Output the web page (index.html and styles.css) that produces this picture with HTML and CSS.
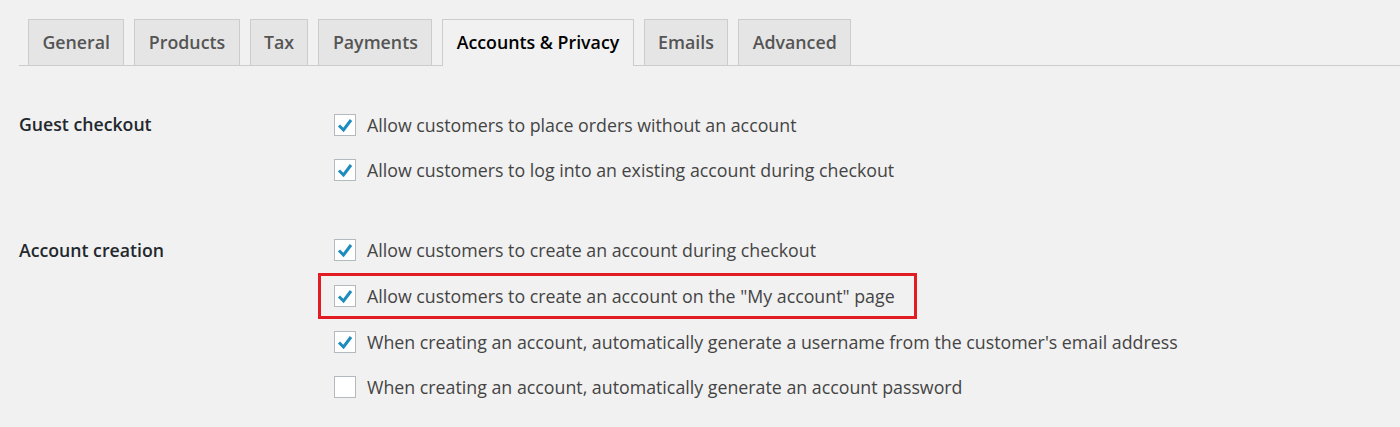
FILE: index.html
```html
<!DOCTYPE html>
<html lang="en">
<head>
    <meta charset="UTF-8">
    <meta name="viewport" content="width=device-width, initial-scale=1.0">
    <title>Accounts &amp; Privacy</title>
    <link rel="stylesheet" href="styles.css">
</head>
<body>
    <nav class="tabs">
        <a class="tab">General</a>
        <a class="tab">Products</a>
        <a class="tab">Tax</a>
        <a class="tab">Payments</a>
        <a class="tab active">Accounts &amp; Privacy</a>
        <a class="tab">Emails</a>
        <a class="tab">Advanced</a>
    </nav>

    <div class="settings">
        <div class="group">
            <div class="label">Guest checkout</div>
            <div class="options">
                <label class="option"><span class="box"><svg viewBox="0 0 20 20"><path d="M4 10.5l4.5 4.5 7.5-10"/></svg></span>Allow customers to place orders without an account</label>
                <label class="option"><span class="box"><svg viewBox="0 0 20 20"><path d="M4 10.5l4.5 4.5 7.5-10"/></svg></span>Allow customers to log into an existing account during checkout</label>
            </div>
        </div>
        <div class="group">
            <div class="label">Account creation</div>
            <div class="options">
                <label class="option"><span class="box"><svg viewBox="0 0 20 20"><path d="M4 10.5l4.5 4.5 7.5-10"/></svg></span>Allow customers to create an account during checkout</label>
                <label class="option marked"><span class="box"><svg viewBox="0 0 20 20"><path d="M4 10.5l4.5 4.5 7.5-10"/></svg></span>Allow customers to create an account on the "My account" page</label>
                <label class="option"><span class="box"><svg viewBox="0 0 20 20"><path d="M4 10.5l4.5 4.5 7.5-10"/></svg></span>When creating an account, automatically generate a username from the customer's email address</label>
                <label class="option"><span class="box"></span>When creating an account, automatically generate an account password</label>
            </div>
        </div>
    </div>
</body>
</html>
```

FILE: styles.css
```css
html, body{
    margin: 0; padding: 0;
}
body{
    background: #f1f1f1;
    font-family: "Open Sans", "Noto Sans", sans-serif;
    color: #444;
    padding: 19px 0 0 19px;
}
.tabs{
    display: flex;
    gap: 10px;
    padding-left: 9px;
    border-bottom: 1px solid #ccc;
}
.tab{
    display: block;
    height: 45px;
    line-height: 45px;
    padding: 0 13.4px;
    margin-bottom: -1px;
    border: 1px solid #ccc;
    border-bottom: none;
    background: #e5e5e5;
    color: #555;
    font-size: 17.8px;
    font-weight: 600;
}
.tab.active{
    background: #f1f1f1;
    color: #000;
    height: 46px;
}
.settings{
    padding-top: 36px;
}
.group{
    display: flex;
    margin-bottom: 34.4px;
}
.label{
    width: 315px;
    height: 45.6px;
    line-height: 45.6px;
    font-size: 17.7px;
    font-weight: 600;
    color: #23282d;
}
.options{
    display: flex;
    flex-direction: column;
    align-items: flex-start;
}
.option{
    position: relative;
    display: flex;
    align-items: center;
    gap: 11px;
    height: 45.6px;
    font-size: 17.8px;
}
.box{
    display: block;
    width: 20px;
    height: 20px;
    border: 1px solid #b4b9be;
    background: #fff;
}
.box svg{
    display: block;
    width: 20px;
    height: 20px;
    fill: none;
    stroke: #1e8cbe;
    stroke-width: 3;
}
.marked::after{
    content: "";
    position: absolute;
    left: -16px;
    right: -22px;
    top: 0;
    bottom: 0;
    border: 3px solid #e31b23;
}
```
